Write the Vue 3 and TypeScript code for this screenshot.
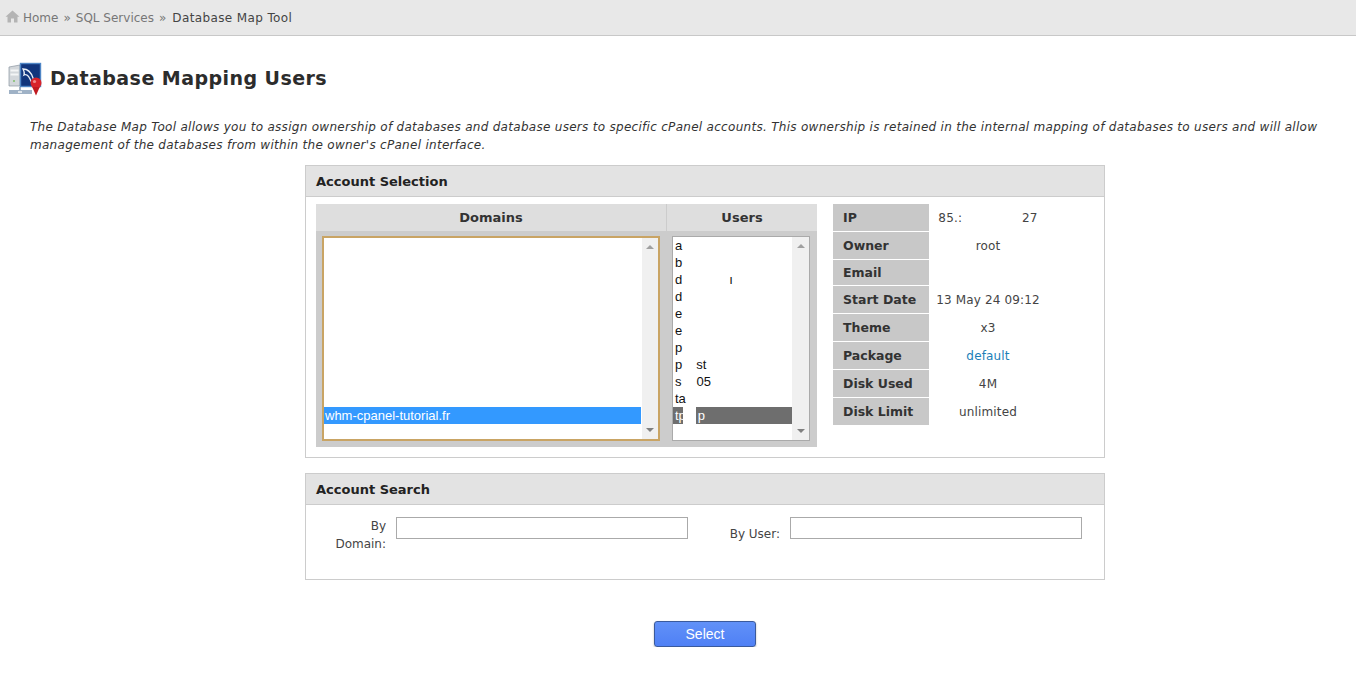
<template>
    <div class="page">
        <div class="crumbs">
            <svg class="home" width="15" height="13" viewBox="0 0 15 13">
                <path d="M7.5 0.5 L0.5 6.8 L2.5 6.8 L2.5 12.5 L6 12.5 L6 8.5 L9 8.5 L9 12.5 L12.5 12.5 L12.5 6.8 L14.5 6.8 Z" fill="#b4b4b4" />
            </svg>
            <span class="crumb">Home</span>
            <span class="sep">»</span>
            <span class="crumb">SQL Services</span>
            <span class="sep">»</span>
            <span class="crumb current">Database Map Tool</span>
        </div>

        <div class="title">
            <svg class="logo" width="34" height="34" viewBox="0 0 34 34">
                <path d="M1 5 L12 3 L12 24 L1 24 Z" fill="#d3d7db" stroke="#8b95a0" stroke-width="0.7" />
                <rect x="2.5" y="7.5" width="8" height="2" fill="#f4f5f6" />
                <rect x="2.5" y="11.5" width="8" height="2" fill="#f4f5f6" />
                <circle cx="6" cy="19" r="1" fill="#7fbf6a" />
                <rect x="12.5" y="1.5" width="20" height="23" fill="#11357c" stroke="#4f86c6" stroke-width="1.4" />
                <path d="M15 7 C19 7 23 10 25 16 C26 19 27 21 29 22 C25 22 23 20 22 17 C20 13 18 12 16 13 C17 11 16 9 15 7 Z" fill="none" stroke="#e8eef6" stroke-width="1.3" />
                <path d="M12 25 L12 28" stroke="#7f93aa" stroke-width="1.4" />
                <rect x="1" y="28" width="23" height="4" fill="#9fb2c6" />
                <rect x="10" y="29" width="4" height="2" fill="#dfe6ec" />
                <circle cx="28" cy="21" r="5.5" fill="#d8232a" />
                <path d="M24.2 25 L28 33.5 L31.8 25 Z" fill="#c01a20" />
                <circle cx="26.5" cy="19.5" r="1.6" fill="#f28a8a" />
            </svg>
            <h1>Database Mapping Users</h1>
        </div>

        <p class="intro">
            The Database Map Tool allows you to assign ownership of databases and database users to specific cPanel accounts. This ownership is retained in the internal mapping of databases to users and will allow management of the databases from within the owner's cPanel interface.
        </p>

        <div class="content">
            <section class="panel">
                <h2>Account Selection</h2>
                <div class="selection">
                    <div class="lists">
                        <div class="list-heads">
                            <div class="head head-domains">Domains</div>
                            <div class="head head-users">Users</div>
                        </div>
                        <div class="list-bodies">
                            <div class="listbox domains">
                                <div class="options">
                                    <div class="option domain-option">whm-cpanel-tutorial.fr</div>
                                </div>
                                <div class="scrollbar">
                                    <span class="arrow up"></span>
                                    <span class="arrow down"></span>
                                </div>
                            </div>
                            <div class="listbox users">
                                <div class="options">
                                    <div
                                        v-for="(user, i) in users"
                                        :key="i"
                                        class="option"
                                        :class="{ picked: user.picked }"
                                    >
                                        <span class="first">{{ user.start }}</span>
                                        <span v-if="user.patch" class="patch"></span>
                                        <span v-if="user.end" :style="{ marginLeft: user.offset + 'px' }">{{ user.end }}</span>
                                    </div>
                                </div>
                                <div class="scrollbar">
                                    <span class="arrow up"></span>
                                    <span class="arrow down"></span>
                                </div>
                            </div>
                        </div>
                    </div>

                    <div class="info">
                        <div class="info-row" :class="{ short: row.label === 'Email' }" v-for="row in info" :key="row.label">
                            <div class="info-label">{{ row.label }}</div>
                            <div class="info-value">
                                <template v-if="row.label === 'IP'">
                                    <span>85.:</span><span class="ip-gap"></span><span>27</span>
                                </template>
                                <a v-else-if="row.link" href="#" class="link">{{ row.value }}</a>
                                <template v-else>{{ row.value }}</template>
                            </div>
                        </div>
                    </div>
                </div>
            </section>

            <section class="panel search-panel">
                <h2>Account Search</h2>
                <div class="search">
                    <label class="search-label by-domain">By Domain:</label>
                    <input class="search-input" type="text" />
                    <label class="search-label by-user">By User:</label>
                    <input class="search-input" type="text" />
                </div>
            </section>

            <div class="actions">
                <button class="select-btn">Select</button>
            </div>
        </div>
    </div>
</template>

<script setup lang="ts">
interface UserRow {
    start: string;
    end?: string;
    offset?: number;
    patch?: boolean;
    picked?: boolean;
}

interface InfoRow {
    label: string;
    value: string;
    link?: boolean;
}

const users: UserRow[] = [
    { start: 'a' },
    { start: 'b' },
    { start: 'd', end: 'ı', offset: 47 },
    { start: 'd' },
    { start: 'e' },
    { start: 'e' },
    { start: 'p' },
    { start: 'p', end: 'st', offset: 14 },
    { start: 's', end: '05', offset: 15 },
    { start: 'ta' },
    { start: 'tp', end: 'p', offset: 2, patch: true, picked: true },
];

const info: InfoRow[] = [
    { label: 'IP', value: '' },
    { label: 'Owner', value: 'root' },
    { label: 'Email', value: '' },
    { label: 'Start Date', value: '13 May 24 09:12' },
    { label: 'Theme', value: 'x3' },
    { label: 'Package', value: 'default', link: true },
    { label: 'Disk Used', value: '4M' },
    { label: 'Disk Limit', value: 'unlimited' },
];
</script>

<style>
body {
    background: #fff;
}
</style>

<style scoped>
.page {
    font-family: "DejaVu Sans", Verdana, sans-serif;
    font-size: 12px;
    color: #333;
}

.crumbs {
    display: flex;
    align-items: center;
    height: 35px;
    padding-left: 5px;
    background: #e8e8e8;
    border-bottom: 1px solid #c8c8c8;
    color: #777;
}

.home {
    margin-right: 3px;
    margin-top: -2px;
}

.sep {
    margin: 0 5px;
}

.current {
    color: #444;
    margin-left: 1px;
    letter-spacing: 0.38px;
}

.title {
    display: flex;
    align-items: center;
    gap: 8px;
    padding: 26px 0 0 8px;
}

.logo {
    flex: none;
}

h1 {
    margin: -2px 0 0;
    font-size: 19px;
    font-weight: bold;
    letter-spacing: 0.45px;
    color: #2c2c2c;
}

.intro {
    margin: 22px 30px 0;
    font-style: italic;
    line-height: 18px;
    letter-spacing: 0.29px;
    color: #333;
}

.content {
    width: 800px;
    margin: 11px 0 0 305px;
}

.panel {
    border: 1px solid #ccc;
}

h2 {
    margin: 0;
    height: 30px;
    line-height: 32px;
    padding-left: 10px;
    font-size: 13px;
    font-weight: bold;
    color: #222;
    background: #e3e3e3;
    border-bottom: 1px solid #ccc;
}

.selection {
    display: flex;
    padding: 7px 10px 10px;
    gap: 16px;
}

.lists {
    width: 501px;
    flex: none;
}

.list-heads {
    display: flex;
    height: 27px;
    background: #dedede;
}

.head {
    font-size: 13px;
    font-weight: bold;
    line-height: 27px;
    text-align: center;
}

.head-domains {
    width: 350px;
    border-right: 1px solid #ccc;
}

.head-users {
    flex: 1;
}

.list-bodies {
    display: flex;
    gap: 12px;
    padding: 5px 7px 6px 6px;
    background: #ccc;
}

.listbox {
    display: flex;
    height: 205px;
    box-sizing: border-box;
    background: #fff;
    font-family: "Liberation Sans", Arial, sans-serif;
    font-size: 13px;
    color: #111;
}

.domains {
    width: 338px;
    border: 2px solid #c9a464;
}

.users {
    width: 138px;
    border: 1px solid #aaa;
}

.options {
    flex: 1;
    min-width: 0;
    display: flex;
    flex-direction: column;
}

.domain-option {
    margin-top: 169px;
    margin-right: 1px;
    background: #3399ff;
    color: #fff;
}

.option {
    display: flex;
    height: 17px;
    line-height: 17px;
    padding-left: 1px;
}

.users .option {
    padding-left: 2px;
}

.picked {
    background: #6e6e6e;
    color: #fff;
}

.patch {
    width: 13px;
    margin-left: -3px;
    background: #fff;
    flex: none;
}

.scrollbar {
    width: 16px;
    flex: none;
    background: #f0f0f0;
    display: flex;
    flex-direction: column;
    justify-content: space-between;
    align-items: center;
    padding: 7px 0;
    box-sizing: border-box;
}

.users .scrollbar {
    width: 17px;
}

.arrow {
    width: 0;
    height: 0;
    border-left: 4px solid transparent;
    border-right: 4px solid transparent;
}

.up {
    border-bottom: 4px solid #a0a0a0;
}

.down {
    border-top: 4px solid #808080;
}

.info {
    width: 272px;
    flex: none;
    display: flex;
    flex-direction: column;
    gap: 1px;
}

.info-row {
    display: flex;
    height: 27px;
}

.info-row.short {
    height: 25px;
}

.info-label {
    width: 86px;
    padding-left: 10px;
    background: #c8c8c8;
    font-size: 12.5px;
    font-weight: bold;
    line-height: 27px;
    color: #333;
}

.short .info-label {
    line-height: 25px;
}

.info-value {
    width: 118px;
    text-align: center;
    line-height: 28px;
    white-space: nowrap;
    letter-spacing: 0.15px;
    color: #444;
}

.ip-gap {
    display: inline-block;
    width: 60px;
}

.link {
    color: #1b7fb8;
    text-decoration: none;
}

.search-panel {
    margin-top: 15px;
}

.search {
    display: flex;
    align-items: flex-start;
    height: 74px;
    box-sizing: border-box;
    padding-top: 12px;
}

.search-label {
    flex: none;
    text-align: right;
    line-height: 18px;
    color: #444;
}

.by-domain {
    width: 60px;
    margin-left: 20px;
    margin-right: 10px;
}

.by-user {
    width: 72px;
    margin-left: 20px;
    margin-right: 10px;
    margin-top: 8px;
}

.search-input {
    width: 292px;
    height: 22px;
    box-sizing: border-box;
    border: 1px solid #aaa;
    background: #fff;
    padding: 0;
    flex: none;
}

.actions {
    display: flex;
    justify-content: center;
    margin-top: 41px;
}

.select-btn {
    width: 102px;
    height: 26px;
    border: 1px solid #3a5a9c;
    border-radius: 3px;
    background: linear-gradient(#6191f8, #4f80f5);
    box-shadow: 0 1px 2px rgba(0, 0, 0, 0.3);
    color: #fff;
    font-family: "Liberation Sans", Arial, sans-serif;
    font-size: 14px;
    padding: 0;
}
</style>
